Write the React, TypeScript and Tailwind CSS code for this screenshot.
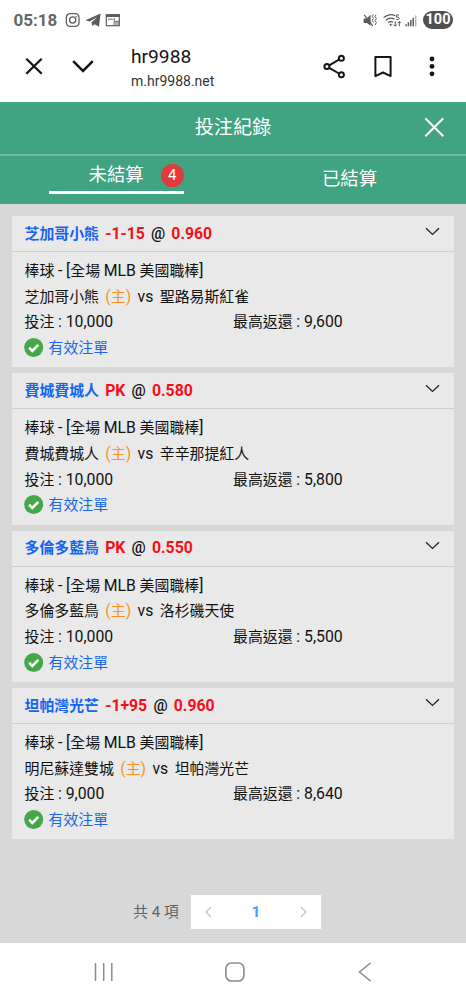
import type { ReactNode } from "react";

interface Bet {
  team: string;
  line: string;
  odds: string;
  home: string;
  away: string;
  stake: string;
  payout: string;
}

const bets: Bet[] = [
  { team: "芝加哥小熊", line: "-1-15", odds: "0.960", home: "芝加哥小熊", away: "聖路易斯紅雀", stake: "10,000", payout: "9,600" },
  { team: "費城費城人", line: "PK", odds: "0.580", home: "費城費城人", away: "辛辛那提紅人", stake: "10,000", payout: "5,800" },
  { team: "多倫多藍鳥", line: "PK", odds: "0.550", home: "多倫多藍鳥", away: "洛杉磯天使", stake: "10,000", payout: "5,500" },
  { team: "坦帕灣光芒", line: "-1+95", odds: "0.960", home: "明尼蘇達雙城", away: "坦帕灣光芒", stake: "9,000", payout: "8,640" },
];

// Latin text runs slightly larger than the Chinese around it
function Latin({ children, className = "" }: { children: ReactNode; className?: string }) {
  return <span className={`text-[15.8px] ${className}`}>{children}</span>;
}

function StatusBar() {
  return (
    <div className="flex h-10 items-center pl-[13.5px] pr-[13px] text-[#5c5c5c]">
      <span className="w-[51.5px] text-[17px] font-bold leading-none text-[#666]">05:18</span>
      <svg className="h-4 w-4" viewBox="0 0 16 16" fill="none" stroke="currentColor" strokeWidth="1.3">
        <rect x="1.4" y="1.7" width="12.6" height="12.6" rx="3.6" />
        <circle cx="7.7" cy="8" r="3.1" />
        <circle cx="11.3" cy="4.6" r="0.5" fill="currentColor" strokeWidth="0.6" />
      </svg>
      <svg className="ml-[4px] h-4 w-4" viewBox="0 0 16 16" fill="currentColor">
        <path d="M0.4 8.3L15.6 1.6L14 14.8L9.6 12.3L7.4 14L6.4 10.6L12.2 5.2L4.6 9.6Z" />
      </svg>
      <svg className="ml-[4px] h-4 w-4" viewBox="0 0 16 16" fill="none" stroke="currentColor" strokeWidth="1.2">
        <rect x="1.3" y="2.7" width="13" height="11" />
        <path d="M1 3.7h13.6" strokeWidth="2.6" />
        <path d="M3 7.2h5M9.3 6v3.4h4.8" strokeWidth="0.9" />
        <path d="M8.2 9.6h5.6v3.4H8.2z" fill="currentColor" stroke="none" opacity="0.5" />
      </svg>

      <div className="ml-auto flex items-center">
        <svg className="h-4 w-4" viewBox="0 0 16 16" fill="none" stroke="currentColor" strokeWidth="1.2">
          <path d="M0.6 6.4h3l4-3.7v11L4 11H0.6z" fill="currentColor" stroke="none" />
          <path d="M1.2 2.8l8.6 11" />
          <path d="M10.3 2.4l-1 2 1.2 2-1.2 2 1.2 2M13 2.6l-1 2 1.4 2-1.4 2 1.4 2-1.4 2.4" strokeWidth="1" />
        </svg>
        <svg className="ml-[4px] h-4 w-5" viewBox="0 0 20 16" fill="none" stroke="currentColor" strokeWidth="1.3">
          <path d="M0.6 5.6C4 2.4 9 2 12 3.7M2.8 8.3C5.2 6.1 8.9 5.7 11.4 7.1M5.2 10.8c1.5-1.4 3.3-1.5 4.8-.6" />
          <circle cx="7.7" cy="12.8" r="1.1" fill="currentColor" stroke="none" />
          <path d="M16 3h-2.6v2.2c2.2-.4 3 .3 3 1.2s-1 1.6-3 1.1" strokeWidth="1" />
          <path d="M12.2 9.4v4.6M10.7 12.6l1.5 1.6 1.5-1.6M16.4 14.2V9.6M14.9 11.1l1.5-1.6 1.5 1.6" strokeWidth="1" />
        </svg>
        <svg className="ml-[2px] h-4 w-3" viewBox="0 0 12 16" fill="none" stroke="currentColor" strokeWidth="1.5">
          <path d="M1 14.2v-2M3.4 14.2v-4M5.8 14.2V8M8.2 14.2V5.8" />
          <path d="M10.7 14.2V3.4" opacity="0.45" />
        </svg>
        <span className="ml-[6px] flex h-[18.5px] w-[30px] items-center justify-center rounded-full bg-[#505050] text-[14.5px] font-bold text-white">
          100
        </span>
      </div>
    </div>
  );
}

function BrowserBar() {
  return (
    <div className="flex h-[61.5px] items-center pb-[9px] text-[#151515]">
      <svg className="ml-[22px] h-6 w-6" viewBox="0 0 24 24" fill="none" stroke="currentColor" strokeWidth="2.3">
        <path d="M4.3 4.8l15.4 15M19.7 4.8l-15.4 15" />
      </svg>
      <svg className="ml-[25px] h-6 w-6" viewBox="0 0 24 24" fill="none" stroke="currentColor" strokeWidth="2.5">
        <path d="M2.2 7.2l9.8 9.8 9.8-9.8" />
      </svg>
      <div className="ml-[36px] mt-[4px] flex-1">
        <div className="text-[19.2px] leading-[25px]">hr9988</div>
        <div className="text-[14px] leading-[24px] text-[#333]">m.hr9988.net</div>
      </div>
      <svg className="h-6 w-6 overflow-visible" viewBox="0 0 24 24" fill="none" stroke="currentColor" strokeWidth="2">
        <path d="M6.2 11.3l9.8-5.7M6.2 13.8l9.8 5.7" />
        <circle cx="3.9" cy="12.6" r="2.5" />
        <circle cx="18.4" cy="4.2" r="2.5" />
        <circle cx="18.4" cy="20.8" r="2.5" />
      </svg>
      <svg className="ml-[24px] h-6 w-6" viewBox="0 0 24 24" fill="none" stroke="currentColor" strokeWidth="2">
        <path d="M4.4 3.1h15.2v19l-7.6-3.6-7.6 3.6z" strokeLinejoin="round" />
      </svg>
      <svg className="ml-[25px] mr-[22px] h-6 w-6" viewBox="0 0 24 24" fill="currentColor">
        <circle cx="12" cy="5" r="2.4" />
        <circle cx="12" cy="12.4" r="2.4" />
        <circle cx="12" cy="19.8" r="2.4" />
      </svg>
    </div>
  );
}

function Header() {
  return (
    <div className="bg-[#40a381] text-white">
      <div className="flex h-[54px] items-center justify-between border-b-2 border-[#72bba2] px-[21px]">
        <span className="w-[21px]" />
        <h1 className="text-[19.2px] leading-none">投注紀錄</h1>
        <svg className="h-[21px] w-[21px]" viewBox="0 0 21 21" fill="none" stroke="currentColor" strokeWidth="2">
          <path d="M1.3 1.3l18 18M19.3 1.3l-18 18" />
        </svg>
      </div>
      <div className="grid h-[48px] grid-cols-2 justify-items-center">
        <div className="flex h-[38.5px] w-[135px] items-center border-b-[3.5px] border-white pl-[39.5px] pt-[4px]">
          <span className="text-[18.4px] leading-none">未結算</span>
          <span className="ml-[17px] flex h-[23px] w-[23px] shrink-0 items-center justify-center rounded-full bg-[#e23b3b] text-[15px]">
            4
          </span>
        </div>
        <div className="flex h-[47px] items-center text-[18.4px]">已結算</div>
      </div>
    </div>
  );
}

function BetCard({ bet }: { bet: Bet }) {
  return (
    <div className="h-[151.3px] bg-[#e9e9e9] text-[14.9px] text-[#111]">
      <div className="flex h-[36px] items-center justify-between border-b border-[#cfcfcf] pl-[12.5px] pr-[14px]">
        <div className="flex items-baseline gap-[6.2px] font-bold">
          <span className="text-[#1565f0]">{bet.team}</span>
          <Latin className="text-[#f80e18]">{bet.line}</Latin>
          <Latin className="font-medium">@</Latin>
          <Latin className="text-[#f80e18]">{bet.odds}</Latin>
        </div>
        <svg className="mb-[5px] h-[9px] w-[15px]" viewBox="0 0 15 9" fill="none" stroke="#222" strokeWidth="1.3">
          <path d="M1 1.2l6.5 6.2L14 1.2" />
        </svg>
      </div>
      <div className="pl-[12.5px] pt-[6px] leading-[25.7px]">
        <div className="h-[25.7px]">
          棒球 <Latin>-</Latin> <Latin>[</Latin>全場 <Latin>MLB</Latin> 美國職棒<Latin>]</Latin>
        </div>
        <div className="flex h-[25.7px] items-baseline gap-[6.4px]">
          <span>{bet.home}</span>
          <span className="text-[#f7931e]">
            <Latin>(</Latin>主<Latin>)</Latin>
          </span>
          <Latin>vs</Latin>
          <span>{bet.away}</span>
        </div>
        <div className="flex h-[25.7px]">
          <span className="w-[208.5px]">
            投注 <Latin>: {bet.stake}</Latin>
          </span>
          <span>
            最高返還 <Latin>: {bet.payout}</Latin>
          </span>
        </div>
        <div className="flex h-[25.7px] items-center gap-[4.5px] text-[#1b66e8]">
          <svg className="-ml-[0.5px] h-5 w-5" viewBox="0 0 20 20">
            <circle cx="9.7" cy="9.5" r="9.5" fill="#43a848" />
            <path d="M5.1 9.8l3.2 3.1 6-6.1" fill="none" stroke="#fff" strokeWidth="2.6" />
          </svg>
          <span className="pt-[2px]">有效注單</span>
        </div>
      </div>
    </div>
  );
}

function Pagination() {
  return (
    <div className="mt-[56px] flex items-center pl-[121px]">
      <span className="w-[58px] text-[15px] text-[#606266]">共 4 項</span>
      <div className="flex h-[34px] w-[130px] items-center justify-between bg-white px-[14px]">
        <svg className="h-[12px] w-[7px]" viewBox="0 0 7 12" fill="none" stroke="#c0c4cc" strokeWidth="1.4">
          <path d="M6 1L1 6l5 5" />
        </svg>
        <span className="text-[15.5px] font-bold text-[#409eff]">1</span>
        <svg className="h-[12px] w-[7px]" viewBox="0 0 7 12" fill="none" stroke="#c0c4cc" strokeWidth="1.4">
          <path d="M1 1l5 5-5 5" />
        </svg>
      </div>
    </div>
  );
}

function NavBar() {
  return (
    <div className="flex h-[57px] items-center justify-between bg-white pl-[94px] pr-[91px] text-[#8c8c8c]">
      <svg className="h-5 w-5" viewBox="0 0 20 20" fill="none" stroke="currentColor" strokeWidth="1.5">
        <path d="M1.5 1v18M9.7 1v18M17.8 1v18" />
      </svg>
      <svg className="h-5 w-5" viewBox="0 0 20 20" fill="none" stroke="currentColor" strokeWidth="1.6">
        <rect x="0.9" y="1" width="18" height="18" rx="5.5" />
      </svg>
      <svg className="h-5 w-5" viewBox="0 0 20 20" fill="none" stroke="currentColor" strokeWidth="1.6">
        <path d="M15.5 1L4.5 10l11 9" />
      </svg>
    </div>
  );
}

export default function App() {
  return (
    <div className="flex h-[1000px] w-[466px] flex-col overflow-hidden bg-white font-['Roboto','Noto_Sans_CJK_TC',sans-serif]">
      <StatusBar />
      <BrowserBar />
      <Header />
      <main className="flex-1 bg-[#d8d8d8] px-[12px] pt-[12.5px]">
        <div className="flex flex-col gap-[6px]">
          {bets.map((bet) => (
            <BetCard key={bet.team} bet={bet} />
          ))}
        </div>
        <Pagination />
      </main>
      <NavBar />
    </div>
  );
}
